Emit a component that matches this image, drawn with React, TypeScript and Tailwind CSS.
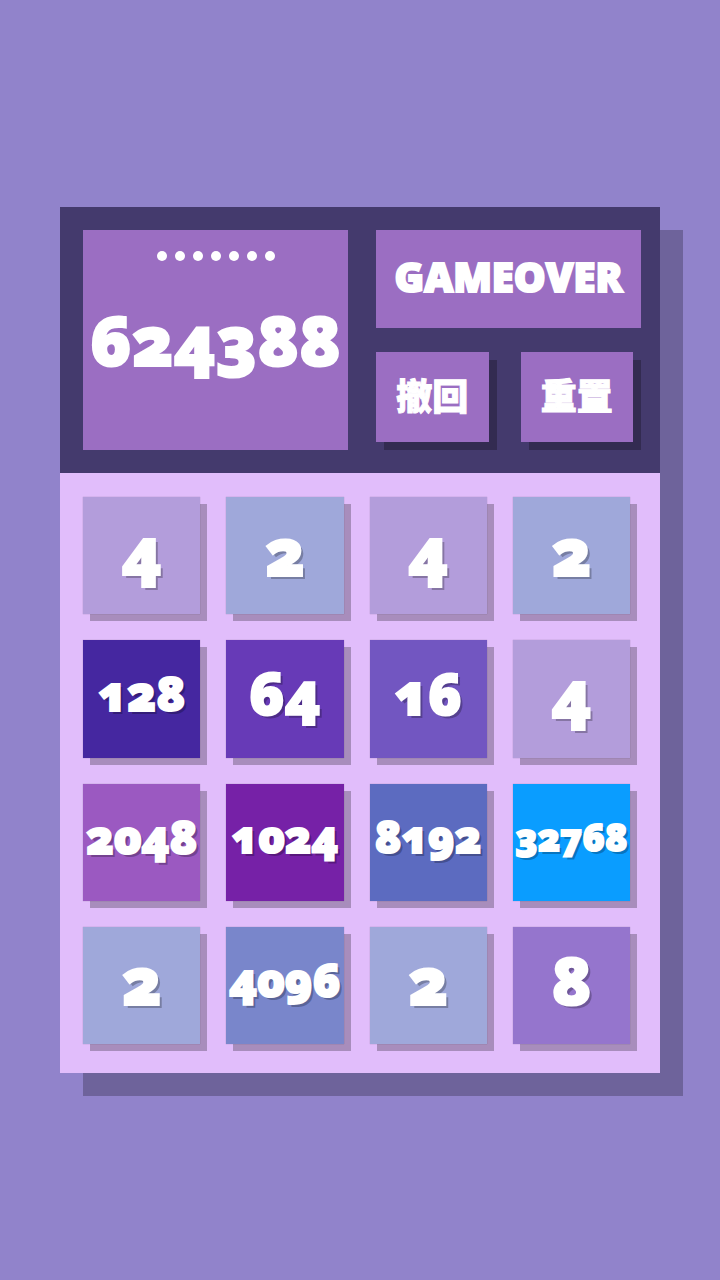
import React from "react";

const tileStyles: Record<number, string> = {
  2: "bg-[#9fa8da] text-[66px]",
  4: "bg-[#b39ddb] text-[66px]",
  8: "bg-[#9575cd] text-[66px]",
  16: "bg-[#7256c1] text-[56px]",
  64: "bg-[#673ab7] text-[59px]",
  128: "bg-[#4527a0] text-[48px]",
  1024: "bg-[#7621a7] text-[44px]",
  2048: "bg-[#9b59c1] text-[46px]",
  4096: "bg-[#7986cb] text-[46px]",
  8192: "bg-[#5c6bc0] text-[44px]",
  32768: "bg-[#0a9dff] text-[37px]",
};

const board = [
  [4, 2, 4, 2],
  [128, 64, 16, 4],
  [2048, 1024, 8192, 32768],
  [2, 4096, 2, 8],
];

function Tile({ value }: { value: number }) {
  return (
    <div
      className={`flex aspect-square min-w-0 items-center justify-center pb-3 leading-none shadow-[7px_7px_0_rgba(0,0,0,0.25),0_0_1px_rgba(0,0,0,0.3)] [text-shadow:3px_3px_0_rgba(0,0,0,0.25)] ${tileStyles[value]}`}
    >
      {value}
    </div>
  );
}

function ActionButton({ label }: { label: string }) {
  return (
    <button
      type="button"
      className="flex flex-1 items-center justify-center bg-[#9b6ec2] text-4xl font-black shadow-[8px_8px_0_rgba(0,0,0,0.25)] [-webkit-text-stroke:1px_white]"
    >
      {label}
    </button>
  );
}

export default function App() {
  return (
    <div className="flex min-h-screen items-center bg-[#9183cb] px-[60px] font-['Open_Sans','Noto_Sans_CJK_SC',sans-serif] font-extrabold text-white oldstyle-nums [-webkit-text-stroke:2px_white]">
      <main className="w-full shadow-[23px_23px_0_#6e639b]">
        <header className="flex gap-7 bg-[#443a6d] py-[23px] pr-[19px] pl-[23px]">
          <div className="flex h-[220px] flex-1 flex-col items-center bg-[#9b6ec2] pt-[21px]">
            <div className="flex gap-2">
              {[1, 2, 3, 4, 5, 6, 7].map((dot) => (
                <span key={dot} className="size-[10px] rounded-full bg-white" />
              ))}
            </div>
            <p className="mt-11 text-[69px] leading-none">624388</p>
          </div>
          <div className="flex flex-1 flex-col gap-6">
            <div className="flex h-[98px] items-center justify-center bg-[#9b6ec2] pb-1 text-[40px] leading-none">
              GAMEOVER
            </div>
            <div className="flex h-[90px] gap-8 pr-2">
              <ActionButton label="撤回" />
              <ActionButton label="重置" />
            </div>
          </div>
        </header>
        <section className="grid grid-cols-4 gap-[26px] bg-[#e1bdfb] pt-6 pr-[30px] pb-[29px] pl-[23px]">
          {board.flat().map((value, i) => (
            <Tile key={i} value={value} />
          ))}
        </section>
      </main>
    </div>
  );
}
